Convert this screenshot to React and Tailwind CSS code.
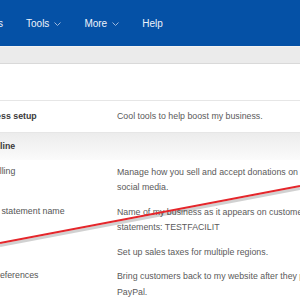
const navItems = [
  { label: 'Reports', menu: false },
  { label: 'Tools', menu: true },
  { label: 'More', menu: true },
  { label: 'Help', menu: false },
];

const rows = [
  {
    label: 'Social selling',
    shift: 'ml-[-36px]',
    lines: ['Manage how you sell and accept donations on', 'social media.'],
  },
  {
    label: 'Credit card statement name',
    shift: 'ml-[-44px]',
    lines: ['Name of my business as it appears on customer', 'statements: TESTFACILIT'],
  },
  { label: '', shift: 'ml-[-42px]', lines: ['Set up sales taxes for multiple regions.'] },
  {
    label: 'Website preferences',
    shift: 'ml-[-42px]',
    lines: ['Bring customers back to my website after they pay with', 'PayPal.'],
  },
];

const Chevron = () => (
  <svg width="7" height="4" viewBox="0 0 7 4" className="mt-[1px]">
    <polyline points="0.5,0.5 3.5,3.5 6.5,0.5" fill="none" stroke="#9fb8dc" strokeWidth="1" />
  </svg>
);

export default function App() {
  return (
    <div className="relative w-[300px] h-[300px] overflow-hidden bg-white font-['Liberation_Sans',Arial,sans-serif]">
      {/* top nav */}
      <div className="h-[46px] bg-[#0551a6] flex items-center">
        <div className="flex items-center gap-[23px] ml-[-32px] whitespace-nowrap">
          {navItems.map(item => (
            <div key={item.label} className="flex items-center gap-[5px] text-[10px] text-[#eef3fb]">
              <span>{item.label}</span>
              {item.menu && <Chevron />}
            </div>
          ))}
        </div>
      </div>

      {/* sub bar */}
      <div className="h-[18px] bg-[#ebebeb] border-t border-t-[#f3f3f3] border-b border-b-[#d9d9d9]" />

      <div className="pt-[36px] text-[8.8px] whitespace-nowrap">
        <div className="h-[33px] flex items-center border-y border-[#e6e6e6]">
          <div className="w-[117px] shrink-0 font-bold text-[#3a3a3a]">
            <span className="inline-block ml-[-42px]">My business setup</span>
          </div>
          <div className="text-[#5a5a5a]">Cool tools to help boost my business.</div>
        </div>

        <div className="h-[27px] flex items-center bg-gradient-to-b from-[#ececec] to-[#fbfbfb]">
          <div className="ml-[-42px] font-bold text-[#3a3a3a]">Selling online</div>
        </div>

        {rows.map((row, i) => (
          <div key={i} className="flex py-[4.5px] leading-[15.5px]">
            <div className="w-[117px] shrink-0 text-[#555] -mt-[1px]">
              <span className={`inline-block ${row.shift}`}>{row.label}</span>
            </div>
            <div className="text-[#5a5a5a]">
              {row.lines.map(line => (
                <div key={line}>{line}</div>
              ))}
            </div>
          </div>
        ))}
      </div>

      {/* red annotation line */}
      <svg className="absolute inset-0 pointer-events-none" width="300" height="300" viewBox="0 0 300 300">
        <line x1="0" y1="245.5" x2="300" y2="188.5" stroke="rgba(0,0,0,0.18)" strokeWidth="3" />
        <line x1="0" y1="243" x2="300" y2="186" stroke="#e4262b" strokeWidth="2.2" />
      </svg>
    </div>
  );
}
